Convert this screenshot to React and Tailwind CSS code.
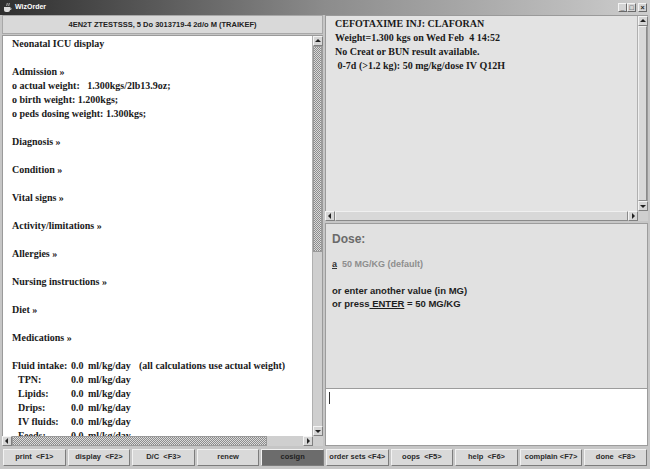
import React from "react";

const serif = "font-['Liberation_Serif',serif]";
const sans = "font-['Liberation_Sans',Arial,sans-serif]";
const dots =
  "[background-image:repeating-conic-gradient(#8c8c8c_0%_25%,#dadada_0%_50%)] [background-size:2px_2px]";

function Arrow({ dir }) {
  const pts = {
    up: "1,5 4,2 7,5",
    down: "1,3 4,6 7,3",
    left: "5,1 2,4 5,7",
    right: "3,1 6,4 3,7",
  }[dir];
  return (
    <div className="w-[10px] h-[10px] shrink-0 bg-[#d6d6d6] border border-t-[#f4f4f4] border-l-[#f4f4f4] border-b-[#808080] border-r-[#808080] flex items-center justify-center">
      <svg width="8" height="8" viewBox="0 0 8 8">
        <polygon points={pts} fill="#222" />
      </svg>
    </div>
  );
}

function VScroll({ thumbTop, thumbH, plain }) {
  return (
    <div className="w-[10px] flex flex-col bg-[#cfcfcf] border-l border-[#b0b0b0]">
      <Arrow dir="up" />
      <div className="flex-1 relative">
        {plain ? (
          <div className="absolute inset-0 border border-t-[#f0f0f0] border-l-[#f0f0f0] border-b-[#8a8a8a] border-r-[#8a8a8a] bg-[#d8d8d8]" />
        ) : (
          <div
            className={`absolute left-0 right-0 border border-[#9a9a9a] ${dots}`}
            style={{ top: thumbTop, height: thumbH }}
          />
        )}
      </div>
      <Arrow dir="down" />
    </div>
  );
}

function HScroll({ thumbW, plain }) {
  return (
    <div className="h-[10px] flex bg-[#cfcfcf]">
      <Arrow dir="left" />
      <div className="flex-1 relative">
        {plain ? (
          <div className="absolute inset-0 border border-t-[#f0f0f0] border-l-[#f0f0f0] border-b-[#8a8a8a] border-r-[#8a8a8a] bg-[#d8d8d8]" />
        ) : (
          <div
            className={`absolute top-0 bottom-0 left-0 border border-[#9a9a9a] ${dots}`}
            style={{ width: thumbW }}
          />
        )}
      </div>
      <Arrow dir="right" />
      <div className="w-[10px] bg-[#cfcfcf]" />
    </div>
  );
}

const leftLines = [
  "Neonatal ICU display",
  "",
  "Admission \u00bb",
  "o actual weight:\u00a0\u00a0 1.300kgs/2lb13.9oz;",
  "o birth weight: 1.200kgs;",
  "o peds dosing weight: 1.300kgs;",
  "",
  "Diagnosis \u00bb",
  "",
  "Condition \u00bb",
  "",
  "Vital signs \u00bb",
  "",
  "Activity/limitations \u00bb",
  "",
  "Allergies \u00bb",
  "",
  "Nursing instructions \u00bb",
  "",
  "Diet \u00bb",
  "",
  "Medications \u00bb",
  "",
];

const fluids = [
  ["Fluid intake:", true],
  ["TPN:"],
  ["Lipids:"],
  ["Drips:"],
  ["IV fluids:"],
  ["Feeds:"],
];

const buttons = [
  "print  <F1>",
  "display  <F2>",
  "D/C  <F3>",
  "renew",
  "cosign",
  "order sets <F4>",
  "oops  <F5>",
  "help  <F6>",
  "complain <F7>",
  "done  <F8>",
];

export default function App() {
  return (
    <div className="w-[650px] h-[469px] bg-[#c6c6c6] flex flex-col overflow-hidden">
      {/* title bar */}
      <div className="h-[15px] shrink-0 flex items-center bg-linear-to-r from-[#2f2f2f] via-[#8c8c8c] to-[#cdcdcd] px-[3px]">
        <svg width="9" height="11" viewBox="0 0 9 11" className="mr-[3px]">
          <path d="M4 1c1 1-1 2 0 3M6 1c1 1-1 2 0 3" stroke="#ddd" strokeWidth="0.8" fill="none" />
          <path d="M1 5h6v3a2 2 0 0 1-2 2H3a2 2 0 0 1-2-2z" fill="#ddd" />
          <path d="M7 6h1v1.5H7" stroke="#ddd" strokeWidth="0.8" fill="none" />
        </svg>
        <span className={`${sans} text-[7px] font-bold text-white`}>WizOrder</span>
        <div className="ml-auto flex gap-0 items-center">
          {["_", "\u25a1", "\u00d7"].map((g, i) => (
            <div
              key={i}
              className={`w-[9px] h-[9px] ${i === 2 ? "ml-[2px]" : ""} bg-[#d4d4d4] border border-t-[#f4f4f4] border-l-[#f4f4f4] border-b-[#6a6a6a] border-r-[#6a6a6a] flex items-center justify-center ${sans} text-[7px] leading-none font-bold text-[#222]`}
            >
              {g}
            </div>
          ))}
        </div>
      </div>

      {/* main */}
      <div className="h-[431px] flex px-[2px] gap-[2px]">
        {/* left pane */}
        <div className="w-[321px] flex flex-col">
          <div className={`h-[19px] shrink-0 bg-[#d9d9d9] border border-[#a8a8a8] flex items-center justify-center ${sans} text-[7.5px] font-bold text-[#222]`}>
            4EN2T ZTESTSSS, 5 Do 3013719-4 2d/o M (TRAIKEF)
          </div>
          <div className="h-[401px] mt-[1px] flex border border-[#9a9a9a] border-b-0">
            <div className={`flex-1 bg-white pl-[9px] pt-[1px] overflow-hidden ${serif} text-[10px] font-bold leading-[14px] text-[#1a1a1a]`}>
              {leftLines.map((l, i) => (
                <div key={i} className="h-[14px] whitespace-pre">{l}</div>
              ))}
              {fluids.map(([label, first], i) => (
                <div key={i} className="h-[14px] flex whitespace-pre">
                  <span className={first ? "w-[59px]" : "w-[59px] pl-[6px]"}>{label}</span>
                  <span className="w-[17px]">0.0</span>
                  <span className="w-[51px]">ml/kg/day</span>
                  {first && <span>(all calculations use actual weight)</span>}
                </div>
              ))}
            </div>
            <VScroll thumbTop={0} thumbH={206} />
          </div>
          <HScroll thumbW={255} />
        </div>

        {/* right pane */}
        <div className="flex-1 flex flex-col">
          <div className="h-[196px] flex border border-[#9a9a9a] border-b-0">
            <div className={`flex-1 bg-[#e3e3e3] pl-[9px] pt-[1px] ${serif} text-[10px] font-bold leading-[14px] text-[#1a1a1a] whitespace-pre`}>
              <div>CEFOTAXIME INJ: CLAFORAN</div>
              <div>Weight=1.300 kgs on Wed Feb  4 14:52</div>
              <div>No Creat or BUN result available.</div>
              <div> 0-7d (&gt;1.2 kg): 50 mg/kg/dose IV Q12H</div>
            </div>
            <VScroll plain />
          </div>
          <HScroll plain />
          <div className={`h-[166px] mt-[2px] bg-[#e1e1e1] border border-[#9c9c9c] px-[6px] pt-[8px] ${sans}`}>
            <div className="text-[12px] font-bold text-[#6a6a6a] leading-[14px]">Dose:</div>
            <div className="mt-[12px] text-[9px] font-bold leading-[12px] text-[#8e8e8e]">
              <span className="underline text-[#333]">a</span>
              <span>&nbsp; 50 MG/KG (default)</span>
            </div>
            <div className="mt-[14px] text-[9.5px] font-bold leading-[13px] text-[#1e1e1e]">
              <div>or enter another value (in MG)</div>
              <div>
                or press<span className="underline"> ENTER</span> = 50 MG/KG
              </div>
            </div>
          </div>
          <div className="flex-1 bg-white border border-[#9c9c9c] border-t-0 pl-[3px] pt-[3px]">
            <div className="w-[1px] h-[12px] bg-[#333]" />
          </div>
        </div>
      </div>

      {/* button bar */}
      <div className="flex-1 flex items-center gap-[2px] px-[3px] pb-[1px]">
        {buttons.map((b) => (
          <div
            key={b}
            className={`flex-1 h-[17px] flex items-center justify-center whitespace-pre ${sans} text-[7.5px] font-bold border border-t-[#f2f2f2] border-l-[#f2f2f2] border-b-[#7c7c7c] border-r-[#7c7c7c] ${
              b === "cosign" ? "bg-[#6c6c6c] text-[#1e1e1e]" : "bg-[#d9d9d9] text-[#2a2a2a]"
            }`}
          >
            {b}
          </div>
        ))}
      </div>
    </div>
  );
}
